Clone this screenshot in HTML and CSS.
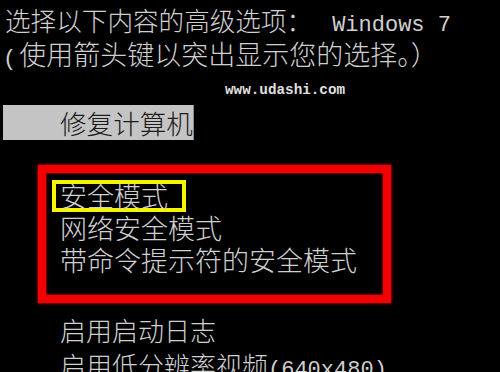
FILE: index.html
```html
<!DOCTYPE html>
<html lang="zh-CN">
<head>
<meta charset="utf-8">
<title>高级启动选项</title>
<link rel="stylesheet" href="styles.css">
</head>
<body>
<div class="screen">
  <div class="title">
    <div class="line l1">选择以下内容的高级选项：<span class="lat w7">Windows 7</span></div>
    <div class="line l2"><span class="lat paren">(</span>使用箭头键以突出显示您的选择。）</div>
  </div>
  <div class="watermark">www.udashi.com</div>
  <div class="repair">修复计算机</div>
  <div class="redbox">
    <div class="item selected">安全模式</div>
    <div class="item">网络安全模式</div>
    <div class="item">带命令提示符的安全模式</div>
  </div>
  <div class="more">
    <div class="item2">启用启动日志</div>
    <div class="item2">启用低分辨率视频<span class="lat">(640x480)</span></div>
  </div>
</div>
</body>
</html>
```
FILE: styles.css
```css
html, body {
  margin: 0;
  padding: 0;
  background: #000;
}
body {
  width: 500px;
  height: 372px;
  overflow: hidden;
  font-family: "Noto Sans CJK SC", "Noto Sans", sans-serif;
  font-weight: 300;
  color: #d0d0d0;
}
.screen {
  padding-top: 3px;
}
.title .line {
  line-height: 34px;
  height: 34px;
  white-space: nowrap;
}
.l1 {
  font-size: 25.6px;
  padding-left: 5px;
}
.l2 {
  font-size: 27px;
  padding-left: 3px;
}
.lat {
  font-family: "Liberation Mono", "DejaVu Sans Mono", monospace;
  font-size: 22px;
  font-weight: normal;
  line-height: 1;
}
.paren {
  margin-right: 3px;
}
.w7 {
  margin-left: 20px;
}
.watermark {
  margin-top: 10px;
  padding-left: 225px;
  line-height: 18px;
  height: 18px;
  font-family: "Liberation Mono", "Courier New", monospace;
  font-size: 14.3px;
  font-weight: bold;
  color: #e0e0e0;
}
.repair {
  margin-top: 6px;
  margin-left: 3px;
  width: 191px;
  height: 35px;
  box-sizing: border-box;
  padding-left: 57px;
  line-height: 35px;
  font-size: 26.6px;
  background: #c4c4c4;
  color: #1c1c1c;
  border-right: 1px solid #8a8a8a;
  white-space: nowrap;
}
.redbox {
  margin-top: 25px;
  margin-left: 38px;
  width: 353px;
  height: 138px;
  box-sizing: border-box;
  border: 8px solid #f20000;
  box-shadow: 0 0 3px #ff0000, inset 0 0 3px #ff0000;
  padding: 7px 0 0 6px;
  font-size: 27px;
}
.item {
  height: 32px;
  line-height: 32px;
  padding-left: 8px;
  white-space: nowrap;
}
.item.selected {
  width: 134px;
  box-sizing: border-box;
  border: 4px solid #f5f500;
  line-height: 24px;
  padding-left: 4px;
}
.more {
  margin-top: 9px;
  padding-left: 60px;
  font-size: 26px;
}
.item2 {
  height: 35px;
  line-height: 35px;
  white-space: nowrap;
}
```
